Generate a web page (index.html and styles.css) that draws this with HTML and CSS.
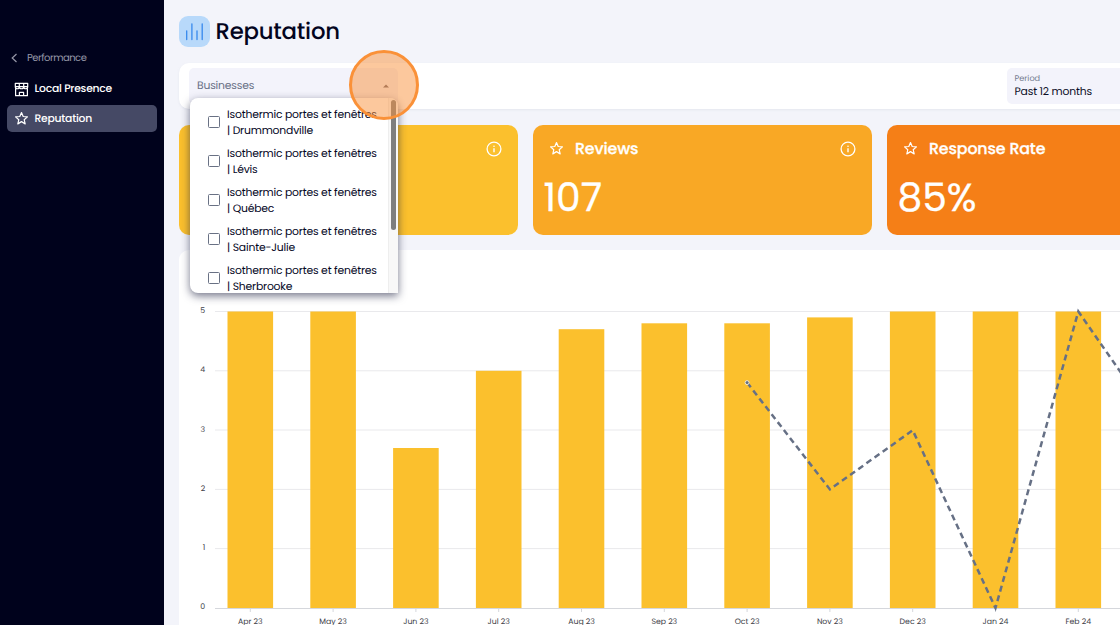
FILE: index.html
```html
<!DOCTYPE html>
<html lang="en">
<head>
<meta charset="utf-8">
<title>Reputation</title>
<link rel="stylesheet" href="styles.css">
</head>
<body>
<svg class="defs" width="0" height="0">
  <symbol id="star" viewBox="0 0 24 24"><path d="M12 2.5l2.7 6.3 6.8.6-5.2 4.5 1.6 6.7-5.9-3.6-5.9 3.6 1.6-6.7-5.2-4.5 6.8-.6z" fill="none" stroke="currentColor" stroke-width="1.9" stroke-linejoin="round"/></symbol>
  <symbol id="info" viewBox="0 0 16 16"><circle cx="8" cy="8" r="6.9" fill="none" stroke="currentColor" stroke-width="1.3"/><path d="M8 7.3v4" stroke="currentColor" stroke-width="1.4"/><circle cx="8" cy="5.2" r=".8" fill="currentColor"/></symbol>
</svg>
<div class="app">
  <nav class="sidebar">
    <a class="back">
      <svg width="7" height="10" viewBox="0 0 7 10"><path d="M5.5 1L1.2 5l4.3 4" fill="none" stroke="currentColor" stroke-width="1.2"/></svg>
      <span>Performance</span>
    </a>
    <a class="nav-item">
      <svg width="15" height="15" viewBox="0 0 15 15" fill="none" stroke="currentColor" stroke-width="1.2" stroke-linejoin="round"><path d="M1.6 6.5v7.2h11.8V6.5M1.3 5V1.3h12.4V5M1.3 4.6h12.4M5.3 1.3v3.3M9.7 1.3v3.3M1.3 4.8c0 2.6 4 2.6 4 0 0 2.6 4.4 2.6 4.4 0 0 2.6 4 2.6 4 0M5.4 13.5v-3.1h4.2v3.1"/></svg>
      <span>Local Presence</span>
    </a>
    <a class="nav-item active">
      <svg width="15" height="15"><use href="#star"/></svg>
      <span>Reputation</span>
    </a>
  </nav>
  <main class="main">
    <header class="heading">
      <span class="heading-icon"><svg width="31" height="31" viewBox="0 0 31 31"><path d="M7.7 14.8v8.8M12.9 7.8v15.8M18 14.8v8.8M23.2 7.8v15.8" stroke="#3789ed" stroke-width="1.3" stroke-linecap="round"/></svg></span>
      <h1>Reputation</h1>
    </header>
    <section class="filters">
      <div class="select">
        <span>Businesses</span>
        <svg width="6" height="4"><path d="M0 3.5L3 .5l3 3z" fill="#6b6470"/></svg>
        <div class="menu">
          <ul class="options">
            <li><i class="box"></i><span>Isothermic portes et fenêtres<br>| Drummondville</span></li>
            <li><i class="box"></i><span>Isothermic portes et fenêtres<br>| Lévis</span></li>
            <li><i class="box"></i><span>Isothermic portes et fenêtres<br>| Québec</span></li>
            <li><i class="box"></i><span>Isothermic portes et fenêtres<br>| Sainte-Julie</span></li>
            <li><i class="box"></i><span>Isothermic portes et fenêtres<br>| Sherbrooke</span></li>
          </ul>
          <div class="track"><div class="thumb"></div></div>
        </div>
        <div class="pointer"></div>
      </div>
      <div class="period"><span class="period-label">Period</span><span class="period-value">Past 12 months</span></div>
    </section>
    <section class="cards">
      <article class="card rating"><div class="card-head"><svg class="info" width="16" height="16"><use href="#info"/></svg></div></article>
      <article class="card reviews">
        <div class="card-head"><svg width="15" height="15"><use href="#star"/></svg><span class="card-title">Reviews</span><svg class="info" width="16" height="16"><use href="#info"/></svg></div>
        <div class="metric">107</div>
      </article>
      <article class="card response">
        <div class="card-head"><svg width="15" height="15"><use href="#star"/></svg><span class="card-title">Response Rate</span></div>
        <div class="metric">85%</div>
      </article>
    </section>
    <section class="chart">
      <svg width="1040" height="390" viewBox="179 250 1040 390">
        <path class="grid" d="M215 311.5h1000M215 370.8h1000M215 430h1000M215 489.4h1000M215 548.6h1000"/>
        <g class="bars">
          <rect x="227.5" y="311.5" width="45.6" height="296.5"/>
          <rect x="310.3" y="311.5" width="45.6" height="296.5"/>
          <rect x="393.1" y="448" width="45.6" height="160"/>
          <rect x="475.9" y="370.8" width="45.6" height="237.2"/>
          <rect x="558.7" y="329.2" width="45.6" height="278.8"/>
          <rect x="641.5" y="323.3" width="45.6" height="284.7"/>
          <rect x="724.3" y="323.3" width="45.6" height="284.7"/>
          <rect x="807.1" y="317.4" width="45.6" height="290.6"/>
          <rect x="889.9" y="311.5" width="45.6" height="296.5"/>
          <rect x="972.7" y="311.5" width="45.6" height="296.5"/>
          <rect x="1055.5" y="311.5" width="45.6" height="296.5"/>
        </g>
        <path class="axis" d="M215 608.5h1000M250.3 608v4M333.1 608v4M415.9 608v4M498.7 608v4M581.5 608v4M664.3 608v4M747.1 608v4M829.9 608v4M912.7 608v4M995.5 608v4M1078.3 608v4"/>
        <path class="trend" d="M747.1 382.6L829.9 489.4 912.7 430.3 995.5 608 1078.3 311.5 1161.1 430.3"/>
        <circle cx="747.1" cy="382.6" r="2" fill="#667085" stroke="#f3ead0" stroke-width="1"/>
        <g class="labels" text-anchor="end">
          <text x="205.2" y="313">5</text><text x="205.2" y="372.3">4</text><text x="205.2" y="431.5">3</text><text x="205.2" y="490.8">2</text><text x="205.2" y="550">1</text><text x="205.2" y="609.3">0</text>
        </g>
        <g class="labels" text-anchor="middle">
          <text x="250.3" y="624.3">Apr 23</text><text x="333.1" y="624.3">May 23</text><text x="415.9" y="624.3">Jun 23</text><text x="498.7" y="624.3">Jul 23</text><text x="581.5" y="624.3">Aug 23</text><text x="664.3" y="624.3">Sep 23</text><text x="747.1" y="624.3">Oct 23</text><text x="829.9" y="624.3">Nov 23</text><text x="912.7" y="624.3">Dec 23</text><text x="995.5" y="624.3">Jan 24</text><text x="1078.3" y="624.3">Feb 24</text>
        </g>
      </svg>
    </section>
  </main>
</div>
</body>
</html>
```
FILE: styles.css
```css
* { box-sizing: border-box; }
body { margin: 0; font-family: Poppins, Inter, "Open Sans", sans-serif; color: #0b0d26; text-rendering: geometricPrecision; }
svg { display: block; flex: none; }
.defs { position: absolute; }
.app { display: flex; width: 1120px; height: 625px; overflow: hidden; background: #f3f4fa; }
.sidebar { flex: none; width: 163.5px; padding: 48.5px 6.5px 0; background: #00021c; color: #fff; font-size: 10.8px; font-weight: 500; letter-spacing: -.25px; }
.back { display: flex; align-items: center; gap: 9.5px; height: 18px; padding-left: 4px; margin-bottom: 9px; color: #9597a7; font-size: 10px; font-weight: 400; letter-spacing: -.5px; }
.nav-item { display: flex; align-items: center; gap: 5.5px; height: 27px; margin-bottom: 2.5px; padding-left: 7.5px; border-radius: 5px; }
.active { background: #454965; }
.main { flex: none; width: 1062px; padding: 15.5px 0 0 15.5px; }
.heading { display: flex; align-items: center; gap: 5.5px; height: 31px; }
.heading-icon { border-radius: 9px; background: #b8d9fa; }
h1 { margin: 0; font-size: 22.8px; line-height: 31px; font-weight: 500; letter-spacing: -.22px; color: #03051e; }
.filters { display: flex; justify-content: space-between; height: 46px; margin-top: 16.5px; padding: 5px 10px; border-radius: 10px; background: #fff; box-shadow: 0 1px 2px #d9dbe680; }
.select { position: relative; display: flex; align-items: center; justify-content: space-between; width: 209px; height: 36px; padding: 0 9.5px 0 8px; border-radius: 5px; background: #f3f3fb; color: #687086; font-size: 10.8px; letter-spacing: -.18px; }
.menu { position: absolute; z-index: 2; top: 30px; left: .5px; display: flex; width: 208px; height: 195px; overflow: hidden; border-radius: 8px 8px 0 8px; background: #fff; box-shadow: 0 3px 8px #2225439e; color: #03051e; }
.options { flex: 1; margin: 0; padding: 9px 0 0 18px; list-style: none; font-size: 10.8px; line-height: 15.6px; white-space: nowrap; }
.options li { display: flex; align-items: center; gap: 7.5px; height: 31.2px; margin-bottom: 7.9px; }
.box { flex: none; width: 12px; height: 12px; margin-top: -1px; border: 1.5px solid #697184; border-radius: 1.5px; }
.track { flex: none; width: 9.5px; padding: 2px 2px; background: #f8f8f8; border-left: 1px solid #eee; }
.thumb { width: 5px; height: 130px; border-radius: 3px; background: #7e7e7e; }
.pointer { position: absolute; z-index: 3; top: -18px; left: 159.5px; width: 70px; height: 70px; border: 3px solid #fa9138; border-radius: 50%; background: #f9913c80; }
.period { display: flex; flex-direction: column; width: 209px; height: 36px; padding: 4px 8px; border-radius: 5px; background: #f3f3fb; }
.period-label { color: #737b8f; font-size: 8.2px; line-height: 12px; }
.period-value { font-size: 10.8px; line-height: 15px; letter-spacing: -.18px; }
.cards { display: flex; gap: 15.5px; margin-top: 16px; }
.card { width: 339px; height: 110px; padding: 14px 15.5px 0; border-radius: 10px; color: #fff; }
.rating { background: #fbc02d; }
.reviews { background: #f9a825; }
.response { background: #f57f17; }
.card-head { display: flex; align-items: center; height: 19px; }
.card-title { margin-left: 11.5px; font-size: 15.8px; font-weight: 500; letter-spacing: -.12px; -webkit-text-stroke: .3px; }
.info { margin-left: auto; }
.metric { margin: 15.5px 0 0 -5px; font-size: 39.2px; line-height: 48px; -webkit-text-stroke: .3px; }
.chart { margin-top: 15px; border-radius: 10px 0 0 0; background: #fff; }
.grid { fill: none; stroke: #e9e9ec; stroke-width: 1; }
.axis { fill: none; stroke: #d5d7dc; stroke-width: 1; }
.bars { fill: #fbc02d; }
.trend { fill: none; stroke: #667085; stroke-width: 2.5; stroke-dasharray: 6 4; }
.labels { fill: #3e4148; font-size: 7.8px; }
```
